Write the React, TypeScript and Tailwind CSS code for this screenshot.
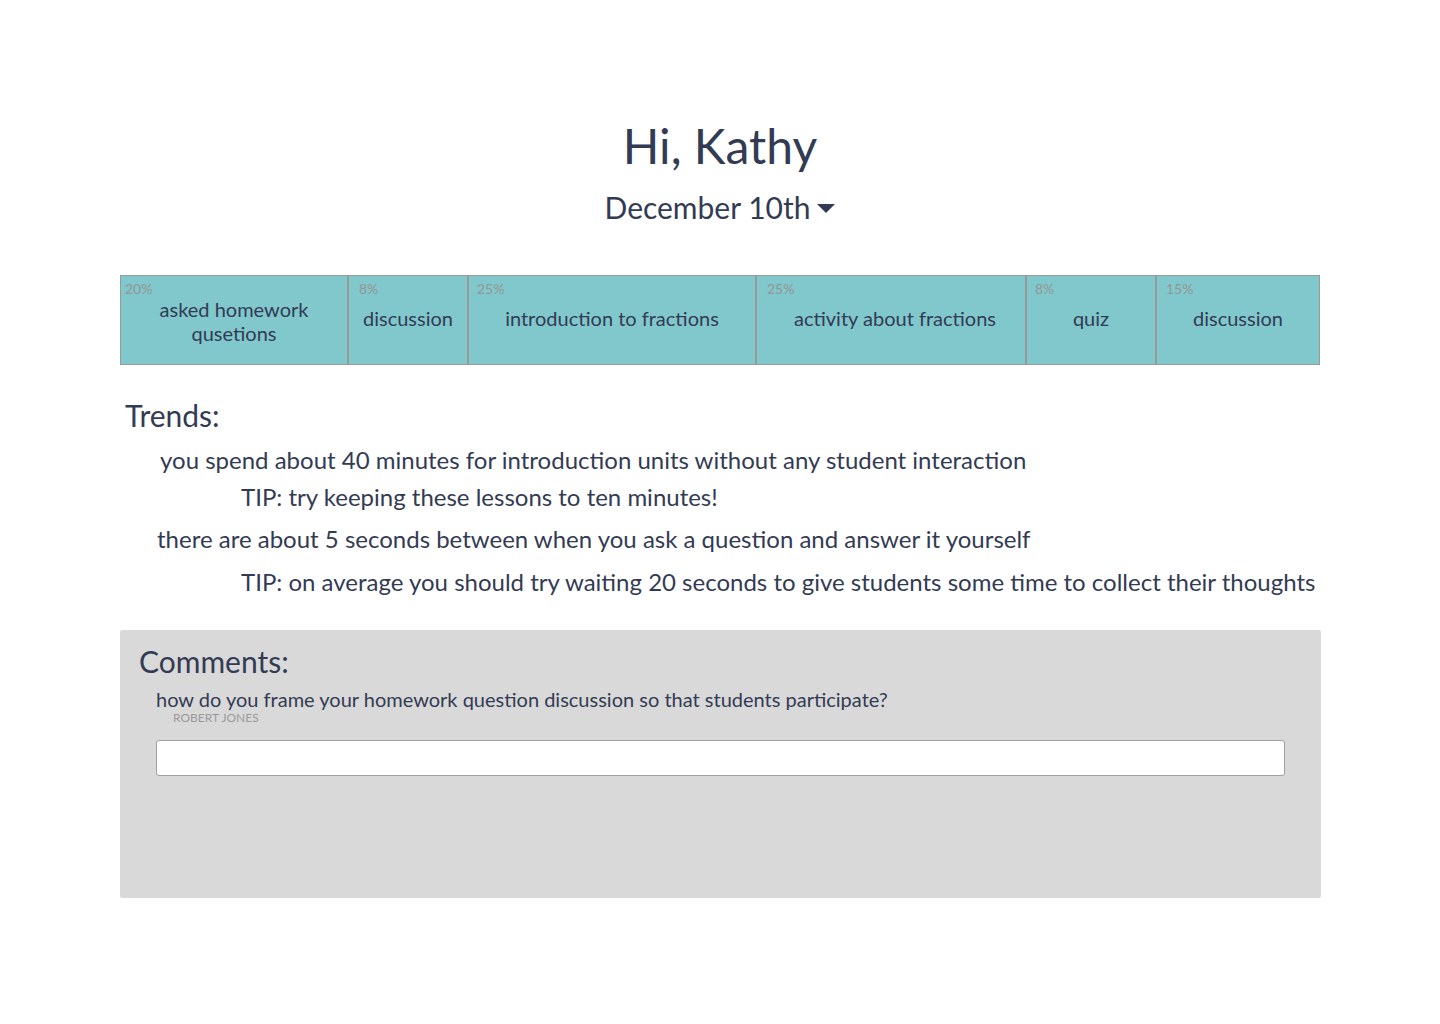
import React from 'react';

type Segment = { pct: string; label: React.ReactNode; width: string; pad: string };

const segments: Segment[] = [
  { pct: '20%', label: <>asked homework<br />qusetions</>, width: 'w-[228px]', pad: 'px-[4px]' },
  { pct: '8%', label: 'discussion', width: 'w-[120px]', pad: 'px-[10px]' },
  { pct: '25%', label: 'introduction to fractions', width: 'w-[288px]', pad: 'px-[8px]' },
  { pct: '25%', label: 'activity about fractions', width: 'w-[270px]', pad: 'pl-[10px] pr-[2px]' },
  { pct: '8%', label: 'quiz', width: 'w-[130px]', pad: 'px-[8px]' },
  { pct: '15%', label: 'discussion', width: 'w-[164px]', pad: 'px-[9px]' },
];

const App = () => {
  return (
    <div className="min-h-[1024px] w-[1440px] bg-white text-[#333b54] font-['Lato','Open_Sans',sans-serif]">
      <div className="mx-auto w-[1200px] pt-[116px]">
        <h1 className="text-center text-[48px] leading-[60px]">Hi, Kathy</h1>
        <div className="mt-[11px] flex items-center justify-center text-[30px] leading-[40px]">
          <span>December 10th</span>
          <svg width="18" height="10" viewBox="0 0 18 10" className="ml-[7px] mt-[3px]">
            <path d="M0 0 L18 0 L9 9 Z" fill="#333b54" />
          </svg>
        </div>

        <div className="mt-[48px] flex h-[90px]">
          {segments.map((s, i) => (
            <div key={i} className={`${s.width} ${s.pad} flex flex-col border border-[#999999] bg-[#80c8cc] pt-[4px]`}>
              <div className="text-[14px] leading-[17px] text-[#959595]">{s.pct}</div>
              <div className="flex flex-1 items-center justify-center pb-[26px] text-center text-[20px] leading-[24px]">
                {s.label}
              </div>
            </div>
          ))}
        </div>

        <div className="mt-[32px] pl-[5px] text-[30px] leading-[36px]">Trends:</div>
        <div className="text-[24px] leading-[32px]">
          <div className="mt-[11px] pl-[40px]">you spend about 40 minutes for introduction units without any student interaction</div>
          <div className="mt-[5px] pl-[121px]">TIP: try keeping these lessons to ten minutes!</div>
          <div className="mt-[10px] pl-[37px]">there are about 5 seconds between when you ask a question and answer it yourself</div>
          <div className="mt-[11px] pl-[121px] whitespace-nowrap">TIP: on average you should try waiting 20 seconds to give students some time to collect their thoughts</div>
        </div>

        <div className="mt-[32px] h-[268px] w-[1201px] rounded-[2px] bg-[#d9d9d9] pt-[12px]">
          <div className="pl-[19px] text-[30px] leading-[38px]">Comments:</div>
          <div className="mt-[7px] pl-[36px] text-[20px] leading-[24px]">
            how do you frame your homework question discussion so that students participate?
          </div>
          <div className="pl-[53px] text-[12px] leading-[14px] text-[#999999]">ROBERT JONES</div>
          <div className="mt-[15px] pl-[36px]">
            <input
              type="text"
              className="h-[36px] w-[1129px] rounded-[3px] border border-[#a0a0a0] bg-white px-2 outline-none"
            />
          </div>
        </div>
      </div>
    </div>
  );
};

export default App;
